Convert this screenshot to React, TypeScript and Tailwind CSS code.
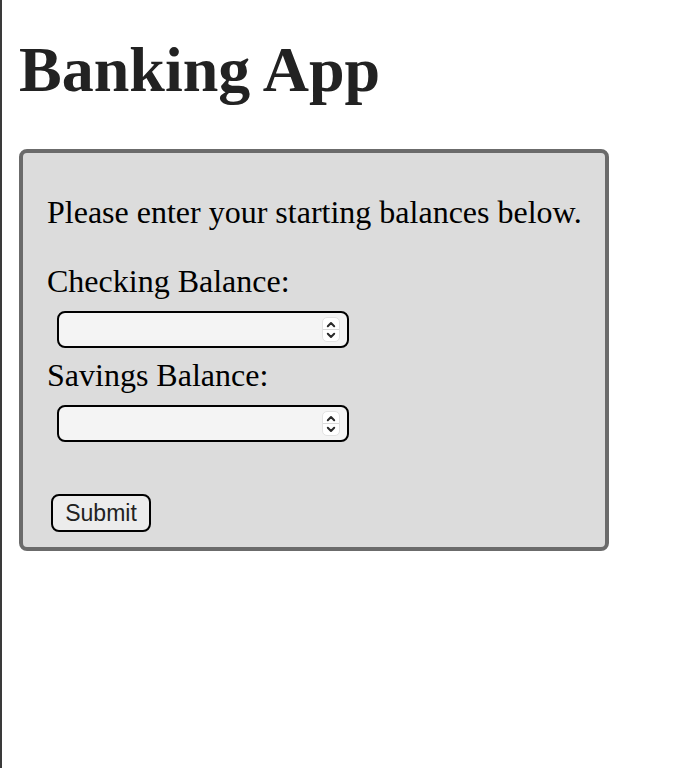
import React, { useState } from "react";

function Spinner() {
  return (
    <div className="flex h-[25px] w-[18px] flex-col overflow-hidden rounded-[5px] border border-[#e2e2e2] bg-white">
      <div className="flex flex-1 items-center justify-center border-b border-[#d9d9d9] pt-[1px]">
        <svg width="10" height="7" viewBox="0 0 10 7" fill="none">
          <path d="M1.8 5.2L5 2l3.2 3.2" stroke="#2a2a2a" strokeWidth="2" strokeLinecap="round" strokeLinejoin="round" />
        </svg>
      </div>
      <div className="flex flex-1 items-center justify-center pb-[1px]">
        <svg width="10" height="7" viewBox="0 0 10 7" fill="none">
          <path d="M1.8 1.8L5 5l3.2-3.2" stroke="#2a2a2a" strokeWidth="2" strokeLinecap="round" strokeLinejoin="round" />
        </svg>
      </div>
    </div>
  );
}

function BalanceInput({ value, onChange }: { value: string; onChange: (v: string) => void }) {
  return (
    <div className="ml-[10px] flex h-[37px] w-[292px] items-center rounded-[8px] border-2 border-black bg-[#f4f4f4] pr-[7px]">
      <input
        type="text"
        inputMode="decimal"
        value={value}
        onChange={(e) => onChange(e.target.value)}
        className="h-full min-w-0 flex-1 bg-transparent px-2 text-[22px] outline-none"
      />
      <Spinner />
    </div>
  );
}

export default function App() {
  const [checking, setChecking] = useState("");
  const [savings, setSavings] = useState("");

  return (
    <div className="min-h-screen border-l-2 border-[#3a3a3a] bg-white pl-[17px] pt-[38px] font-['Liberation_Serif',serif] text-black">
      <h1 className="text-[64px] font-bold leading-[64px] text-[#222]">Banking App</h1>

      {/* form box */}
      <div className="mt-[47px] h-[402px] w-[590px] rounded-[8px] border-4 border-[#6b6b6b] bg-[#dcdcdc] pl-[24px] pt-[41px]">
        <p className="text-[32px] leading-[36px]">Please enter your starting balances below.</p>

        <label className="mt-[33px] block text-[32px] leading-[36px]">Checking Balance:</label>
        <div className="mt-[12px]">
          <BalanceInput value={checking} onChange={setChecking} />
        </div>

        <label className="mt-[9px] block text-[32px] leading-[36px]">Savings Balance:</label>
        <div className="mt-[12px]">
          <BalanceInput value={savings} onChange={setSavings} />
        </div>

        <button className="ml-[4px] mt-[52px] flex h-[38px] w-[100px] items-center justify-center rounded-[8px] border-2 border-black bg-[#ececec] font-['Liberation_Sans',sans-serif] text-[23px] text-[#222]">
          Submit
        </button>
      </div>
    </div>
  );
}
